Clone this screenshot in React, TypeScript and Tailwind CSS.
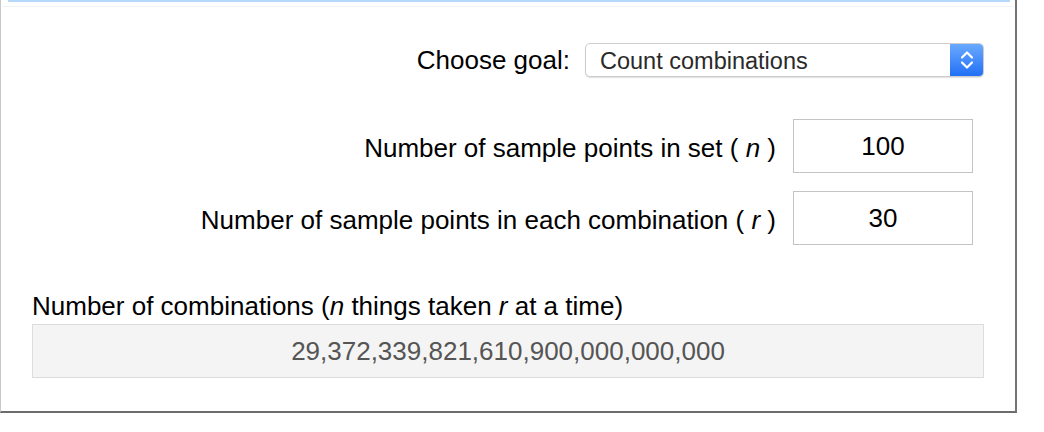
const font = { fontFamily: '"Liberation Sans", Arial, Helvetica, sans-serif' };

function ChevronUpDown() {
  return (
    <svg width="16" height="22" viewBox="0 0 16 22" fill="none" stroke="white" strokeWidth="2.2" strokeLinecap="round" strokeLinejoin="round">
      <path d="M3 8.5 L8 3.5 L13 8.5" />
      <path d="M3 13.5 L8 18.5 L13 13.5" />
    </svg>
  );
}

function NumberRow({ label, variable, value }: { label: string; variable: string; value: string }) {
  return (
    <div className="flex items-center justify-end pr-[11px]">
      <span className="text-[26px] text-black leading-[30px] mt-[3px]">
        {label} ( <i>{variable}</i> )
      </span>
      <div className="ml-[17px] flex h-[54px] w-[180px] items-center justify-center border border-[#c4c4c4] bg-white text-[26px] text-black">
        {value}
      </div>
    </div>
  );
}

export default function App() {
  return (
    <div className="h-[432px] w-[1044px] bg-white" style={font}>
      <div className="relative h-[413px] w-[1017px] border-l border-r-2 border-b-2 border-l-[#c9c9c9] border-r-[#747474] border-b-[#6c6c6c]">
        <div className="absolute left-[7px] right-[5px] top-0 h-[2px] bg-[#b5d9fb]" />
        <div className="absolute left-[2px] right-[2px] top-[6px] h-px bg-[#f1f1f1]" />

        <div className="flex flex-col pl-[31px] pr-[31px] pt-[43px]">
          <div className="flex items-center justify-end">
            <span className="text-[26px] leading-[30px] text-black">Choose goal:</span>
            <div className="ml-[15px] flex h-[34px] w-[399px] items-stretch overflow-hidden rounded-[5px] border border-[#cdcdcd] bg-white shadow-[0_1px_1px_rgba(0,0,0,0.12)]">
              <div className="flex flex-1 items-center pl-[14px] pt-[3px] text-[23.5px] text-[#2a2a2a]">Count combinations</div>
              <div className="flex w-[33px] items-center justify-center bg-gradient-to-b from-[#6aa9ff] to-[#1f6ff5]">
                <ChevronUpDown />
              </div>
            </div>
          </div>

          <div className="mt-[42px]">
            <NumberRow label="Number of sample points in set" variable="n" value="100" />
          </div>
          <div className="mt-[18px]">
            <NumberRow label="Number of sample points in each combination" variable="r" value="30" />
          </div>

          <div className="mt-[46px] text-[26px] leading-[30px] text-black">
            Number of combinations (<i>n</i> things taken <i>r</i> at a time)
          </div>
          <div className="mt-[3px] flex h-[54px] items-center justify-center border border-[#dcdcdc] bg-[#f4f4f4] text-[26px] text-[#555]">
            29,372,339,821,610,900,000,000,000
          </div>
        </div>
      </div>
    </div>
  );
}
